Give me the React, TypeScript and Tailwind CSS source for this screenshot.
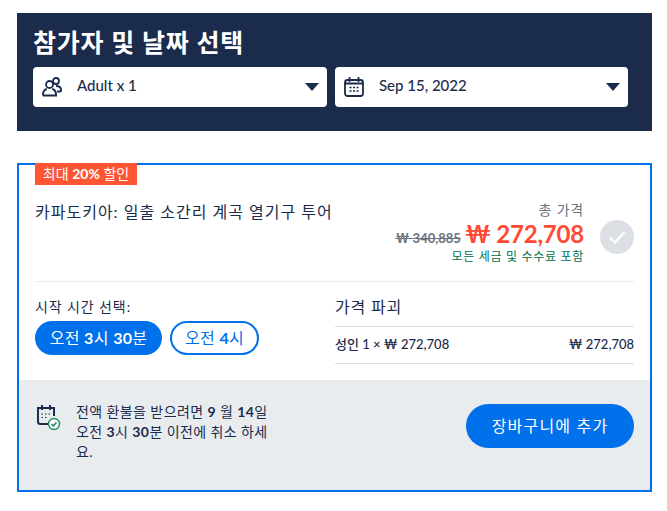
const font = 'font-["Lato","Noto_Sans_CJK_KR",sans-serif]';

function PeopleIcon() {
  return (
    <svg width="20" height="20" viewBox="0 0 20 20" fill="none" stroke="#1b2b4b" strokeWidth="1.8">
      <circle cx="7.500" cy="7.500" r="3.500" />
      <circle cx="14" cy="4" r="3" />
      <path d="M.9 18.500c0-4 1.800-6 3.900-6.500M10.200 12c2.200.5 3.900 2.500 3.900 6.500H.9" />
      <path d="M14 9c3.500 0 5.200 2 5.200 4.500 0 .8-.5 1-1.200 1h-3" />
    </svg>
  );
}

function CalendarIcon() {
  return (
    <svg width="20" height="20" viewBox="0 0 20 20" fill="none" stroke="#1b2b4b" strokeWidth="1.800">
      <rect x="1" y="3" width="18" height="16" rx="2.500" />
      <path d="M5.500 0v5M14.500 0v5M1 6.500h18" />
      <path d="M5.500 10.500h2M9 10.500h2M12.500 10.500h2M5.500 14h2M9 14h2M12.500 14h2" strokeWidth="1.400" />
    </svg>
  );
}

function RefundIcon() {
  return (
    <svg width="24" height="26" viewBox="0 0 24 26" fill="none">
      <path d="M11 19H3.500A2.500 2.500 0 0 1 1 16.500V3h16v8" stroke="#1b2b4b" strokeWidth="2" />
      <path d="M5 0v5M13 0v5" stroke="#1b2b4b" strokeWidth="2" />
      <path d="M4.500 9h1.500M8 9h1.500M11.500 9h1.500M4.500 12.500h1.500M8 12.500h1.500" stroke="#1b2b4b" strokeWidth="1.200" />
      <circle cx="17" cy="19" r="5.500" fill="#fff" stroke="#1f8a5f" strokeWidth="1.400" />
      <path d="M14.500 19l1.800 1.800 3.200-3.400" stroke="#1f8a5f" strokeWidth="1.500" />
    </svg>
  );
}

function Caret() {
  return <span className="h-0 w-0 border-x-[7px] border-t-[8px] border-x-transparent border-t-[#1b2b4b]" />;
}

function Select({ icon, label, className }: { icon: React.ReactNode; label: string; className: string }) {
  return (
    <div className={`flex h-10 items-center rounded-[4px] bg-white pr-[8px] ${className}`}>
      <span className="flex w-[44px] justify-center pr-[7px]">{icon}</span>
      <span className="-mt-1 flex-1 text-[15px] font-medium text-[#1b2b4b]">{label}</span>
      <Caret />
    </div>
  );
}

export default function App() {
  return (
    <div className={`min-h-[511px] bg-white px-[17px] pt-[13px] ${font}`}>
      <section className="h-[118px] w-[635px] bg-[#1b2b4b] pt-[12px] pr-6 pl-4">
        <h1 className="text-[25px] leading-[34px] font-bold tracking-[.8px] text-white">참가자 및 날짜 선택</h1>
        <div className="mt-[8px] flex gap-2">
          <Select icon={<PeopleIcon />} label="Adult x 1" className="w-[294px]" />
          <Select icon={<CalendarIcon />} label="Sep 15, 2022" className="w-[293px]" />
        </div>
      </section>

      <section className="relative mt-8 h-[329px] w-[635px] border-2 border-[#0070eb]">
        <span className="absolute -top-[2px] left-[16px] flex h-[22px] w-[102px] items-center justify-center bg-[#ff5533] pb-[1px] text-[14px] text-white">
          최대&nbsp;<b>20%</b>&nbsp;할인
        </span>

        <div className="mx-4 flex h-[117px] border-b border-[#e9ecef] pt-[35px]">
          <p className="flex-1 text-[16px] leading-6 tracking-[1px] text-[#1b2b4b]">카파도키아: 일출 소간리 계곡 열기구 투어</p>
          <div className="flex flex-col items-end">
            <span className="text-[14px] leading-5 tracking-[.8px] text-[#6b7280]">총 가격</span>
            <div className="flex items-baseline gap-[4px]">
              <s className="text-[13px] font-bold text-[#6b7280]">₩ 340,885</s>
              <span className="text-[24px] leading-7 font-bold tracking-[-.2px] text-[#ff4a33]">₩ 272,708</span>
            </div>
            <span className="text-[12px] leading-4 tracking-[.7px] text-[#00704a]">모든 세금 및 수수료 포함</span>
          </div>
          <span className="mt-[20px] ml-4 flex size-[34px] items-center justify-center rounded-full bg-[#dcdfe4]">
            <svg width="20" height="20" viewBox="0 0 20 20" fill="none" stroke="#fff" strokeWidth="2">
              <path d="M3 10.500l5 5L17.500 5" />
            </svg>
          </span>
        </div>

        <div className="mx-4 flex h-[98px]">
          <div className="w-[300px]">
            <p className="mt-[15px] text-[14px] leading-5 tracking-[.9px] text-[#1b2b4b]">시작 시간 선택:</p>
            <div className="mt-[4px] flex gap-2">
              <span className="flex h-[34px] w-[127px] items-center justify-center rounded-full bg-[#0070eb] text-[16px] tracking-[.3px] text-white">
                오전&nbsp;<b>3</b>시&nbsp;<b>30</b>분
              </span>
              <span className="flex h-[34px] w-[89px] items-center justify-center rounded-full border-2 border-[#0070eb] text-[16px] tracking-[.3px] text-[#0070eb]">
                오전&nbsp;<b>4</b>시
              </span>
            </div>
          </div>
          <div className="flex-1">
            <p className="h-[45px] border-b border-[#dcdfe4] pt-[13px] text-[16px] leading-6 tracking-[.8px] text-[#1b2b4b]">가격 파괴</p>
            <div className="flex h-[37px] items-center justify-between border-b border-[#dcdfe4] text-[13px] font-medium text-[#1b2b4b]">
              <span>성인 1 × ₩ 272,708</span>
              <span>₩ 272,708</span>
            </div>
          </div>
        </div>

        <div className="flex h-[110px] bg-[#e9ecef] pr-4 pl-[16px]">
          <div className="mt-[25px] w-[41px] pl-[2px]">
            <RefundIcon />
          </div>
          <p className="mt-[22px] w-[200px] text-[14px] leading-5 tracking-[.4px] text-[#1b2b4b]">
            전액 환불을 받으려면 <b>9</b> 월 <b>14</b>일 오전 <b>3</b>시 <b>30</b>분 이전에 취소 하세요.
          </p>
          <button className="mt-[24px] ml-auto h-[44px] w-[168px] rounded-full bg-[#0070eb] text-[16px] tracking-[1.2px] text-white">
            장바구니에 추가
          </button>
        </div>
      </section>
    </div>
  );
}
